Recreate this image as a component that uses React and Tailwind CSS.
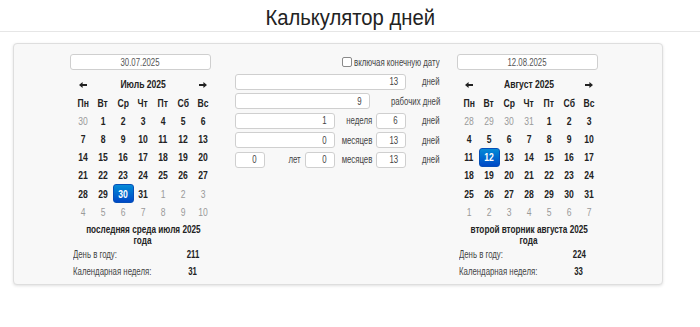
import React from "react";

const FONT = { fontFamily: '"Liberation Sans", Arial, sans-serif' };

function T({ children, o = "origin-center", className = "" }) {
  return (
    <span className={`inline-block shrink-0 scale-x-[0.78] whitespace-nowrap ${o} ${className}`}>{children}</span>
  );
}

function buildMonth(year, month) {
  const first = new Date(year, month, 1);
  const offset = (first.getDay() + 6) % 7;
  const cells = [];
  for (let i = 0; i < 42; i++) {
    const d = new Date(year, month, 1 - offset + i);
    cells.push({ day: d.getDate(), inMonth: d.getMonth() === month });
  }
  return cells;
}

const DAY_NAMES = ["Пн", "Вт", "Ср", "Чт", "Пт", "Сб", "Вс"];

function Arrow({ dir }) {
  return (
    <svg width="8" height="6" viewBox="0 0 8 6" className={dir === "right" ? "rotate-180" : ""}>
      <path d="M0 3 L3.6 0 L3.6 2 L8 2 L8 4 L3.6 4 L3.6 6 Z" fill="#222" />
    </svg>
  );
}

function Calendar({ date, title, year, month, selected, note, dayOfYear, week, gridOffset }) {
  const cells = buildMonth(year, month);
  const rows = [];
  for (let r = 0; r < 6; r++) rows.push(cells.slice(r * 7, r * 7 + 7));
  return (
    <div className="flex w-[143px] flex-col">
      <div className="flex h-[16px] w-[141px] items-center justify-center rounded-[3px] border border-[#cfcfcf] bg-white text-[10px] text-[#555]">
        <T>{date}</T>
      </div>
      <div className={`mt-[5px] flex w-[140px] flex-col ${gridOffset}`}>
        <div className="flex h-[19px] items-center text-[11px] font-bold text-[#222]">
          <div className="flex w-[20px] justify-center">
            <Arrow dir="left" />
          </div>
          <div className="flex flex-1 justify-center">
            <T>{title}</T>
          </div>
          <div className="flex w-[20px] justify-center">
            <Arrow dir="right" />
          </div>
        </div>
        <div className="flex h-[18px] items-center text-[11px] font-bold text-[#222]">
          {DAY_NAMES.map((n) => (
            <div key={n} className="flex w-[20px] justify-center">
              <T>{n}</T>
            </div>
          ))}
        </div>
        {rows.map((row, ri) => (
          <div key={ri} className="flex h-[18.2px] items-center text-[11px] font-bold">
            {row.map((c, ci) => {
              const isSel = c.inMonth && c.day === selected;
              return (
                <div key={ci} className="flex w-[20px] justify-center">
                  {isSel ? (
                    <div className="flex h-[19px] w-[21px] shrink-0 items-center justify-center rounded-[3px] border border-[#0550b8] bg-gradient-to-b from-[#0a8ad6] to-[#0047c6] text-white">
                      <T>{c.day}</T>
                    </div>
                  ) : (
                    <T className={c.inMonth ? "text-[#222]" : "font-normal text-[#9a9a9a]"}>{c.day}</T>
                  )}
                </div>
              );
            })}
          </div>
        ))}
        <div className="mt-[3px] flex flex-col items-center text-[10.5px] font-bold leading-[11px] text-[#222]">
          <T>{note[0]}</T>
          <T>{note[1]}</T>
        </div>
        <div className="flex h-[17px] items-center text-[10px]">
          <div className="min-w-0 flex-1 text-[#444]">
            <T o="origin-left">День в году:</T>
          </div>
          <div className="flex w-[40px] justify-center font-bold text-[#222]">
            <T>{dayOfYear}</T>
          </div>
        </div>
        <div className="flex h-[17px] items-center text-[10px]">
          <div className="min-w-0 flex-1 text-[#444]">
            <T o="origin-left">Календарная неделя:</T>
          </div>
          <div className="flex w-[40px] justify-center font-bold text-[#222]">
            <T>{week}</T>
          </div>
        </div>
      </div>
    </div>
  );
}

function Inp({ w, v }) {
  return (
    <div
      className={`flex h-[16px] shrink-0 items-center justify-end rounded-[3px] border border-[#cfcfcf] bg-white pr-[7px] text-[10px] text-[#444] ${w}`}
    >
      <T o="origin-right">{v}</T>
    </div>
  );
}

function Lbl({ w, children }) {
  return (
    <div className={`flex shrink-0 justify-end pr-[4px] text-[10px] text-[#444] ${w}`}>
      <T o="origin-right">{children}</T>
    </div>
  );
}

function End({ children }) {
  return (
    <div className="flex min-w-0 flex-1 justify-end text-[10px] text-[#444]">
      <T o="origin-right">{children}</T>
    </div>
  );
}

export default function App() {
  return (
    <div className="min-h-[327px] w-[700px] bg-white" style={FONT}>
      <div className="flex h-[32px] items-center justify-center border-b border-[#e6e6e6] pt-[3px] text-[22px] text-[#222]">
        <span className="inline-block scale-x-[0.92] whitespace-nowrap">Калькулятор дней</span>
      </div>
      <div className="ml-[13px] mt-[11px] flex h-[242px] w-[650px] rounded-[4px] border border-[#dedede] bg-[#f8f8f8] pl-[56px] pt-[10px] shadow-[0_1px_3px_rgba(0,0,0,0.12)]">
        <Calendar
          date="30.07.2025"
          title="Июль 2025"
          year={2025}
          month={6}
          selected={30}
          note={["последняя среда июля 2025", "года"]}
          dayOfYear="211"
          week="31"
          gridOffset="ml-[3px]"
        />
        <div className="ml-[22px] flex w-[205px] flex-col gap-[3.5px]">
          <div className="flex h-[16px] items-center justify-end text-[10px] text-[#444]">
            <div className="mr-[3px] h-[10px] w-[10px] shrink-0 rounded-[2px] border border-[#8a8a8a] bg-white" />
            <div className="flex w-[85px] justify-end">
              <T o="origin-right">включая конечную дату</T>
            </div>
          </div>
          <div className="flex h-[16px] items-center">
            <Inp w="w-[171px]" v="13" />
            <End>дней</End>
          </div>
          <div className="flex h-[16px] items-center">
            <Inp w="w-[135px]" v="9" />
            <End>рабочих дней</End>
          </div>
          <div className="flex h-[16px] items-center">
            <Inp w="w-[100px]" v="1" />
            <Lbl w="w-[41px]">неделя</Lbl>
            <Inp w="w-[30px]" v="6" />
            <End>дней</End>
          </div>
          <div className="flex h-[16px] items-center">
            <Inp w="w-[100px]" v="0" />
            <Lbl w="w-[41px]">месяцев</Lbl>
            <Inp w="w-[30px]" v="13" />
            <End>дней</End>
          </div>
          <div className="flex h-[16px] items-center">
            <Inp w="w-[30px]" v="0" />
            <Lbl w="w-[40px]">лет</Lbl>
            <Inp w="w-[30px]" v="0" />
            <Lbl w="w-[41px]">месяцев</Lbl>
            <Inp w="w-[30px]" v="13" />
            <End>дней</End>
          </div>
        </div>
        <div className="ml-[17px]">
          <Calendar
            date="12.08.2025"
            title="Август 2025"
            year={2025}
            month={7}
            selected={12}
            note={["второй вторник августа 2025", "года"]}
            dayOfYear="224"
            week="33"
            gridOffset="ml-[2px]"
          />
        </div>
      </div>
    </div>
  );
}
